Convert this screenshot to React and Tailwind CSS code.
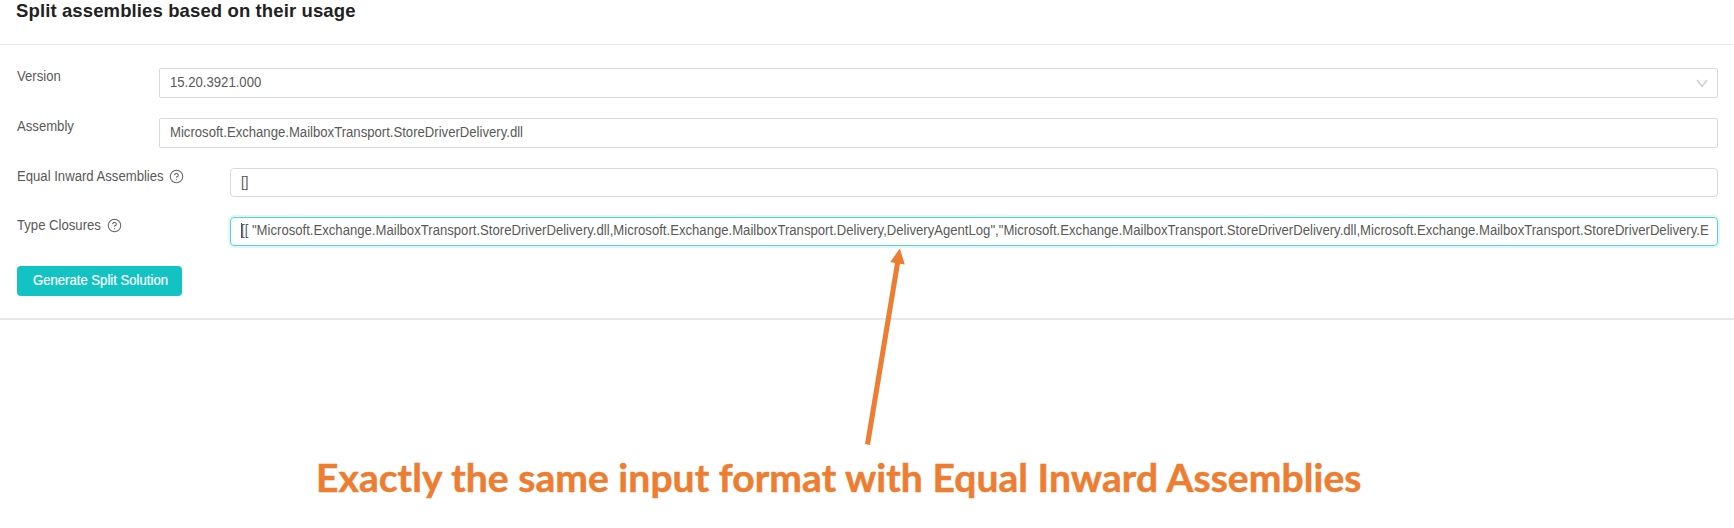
import { CircleHelp } from "lucide-react";

function Condensed({ children }) {
  return (
    <span className="inline-block origin-left scale-x-[0.9375] whitespace-nowrap">{children}</span>
  );
}

function Row({ label, helpClass, labelClass, children }) {
  return (
    <div className="flex items-start">
      <div className={`-mt-px flex h-[18px] shrink-0 items-center whitespace-nowrap ${labelClass}`}>
        <Condensed>{label}</Condensed>
        {helpClass && (
          <CircleHelp className={`size-[15px] shrink-0 text-[#666666] ${helpClass}`} strokeWidth={1.7} />
        )}
      </div>
      {children}
    </div>
  );
}

export default function App() {
  return (
    <div className="relative h-[528px] w-[1734px] overflow-hidden bg-white font-['Liberation_Sans',Arial,sans-serif] text-[14px] leading-[18px] text-[#595959]">
      <header className="flex h-[45px] items-start border-b border-[#e8e8e8] pl-4">
        <h1 className="whitespace-nowrap text-[18.5px] leading-[21px] font-bold tracking-[0.12px] text-[#222222]">
          Split assemblies based on their usage
        </h1>
      </header>

      <main className="flex h-[275px] flex-col border-b-2 border-[#e8e8e8] pt-[23px] pr-[16px] pl-[17px]">
        <div className="h-[50px]">
          <Row label="Version" labelClass="w-[142px]">
            <div className="flex h-[30px] flex-1 items-center justify-between rounded-[2px] border border-[#d9d9d9] pr-[9px] pb-[2px] pl-[10px]">
              <Condensed>15.20.3921.000</Condensed>
              <svg className="mt-[3px] h-[9px] w-[12px]" viewBox="0 0 12 9" fill="none" stroke="#c8c8c8" strokeWidth="1.3">
                <path d="M1 1 6 7.5 11 1" />
              </svg>
            </div>
          </Row>
        </div>
        <div className="h-[50px]">
          <Row label="Assembly" labelClass="w-[142px]">
            <div className="flex h-[30px] flex-1 items-center rounded-[2px] border border-[#d9d9d9] pb-[2px] pl-[10px]">
              <Condensed>Microsoft.Exchange.MailboxTransport.StoreDriverDelivery.dll</Condensed>
            </div>
          </Row>
        </div>
        <div className="h-[49px]">
          <Row label="Equal Inward Assemblies" helpClass="-ml-[4px]" labelClass="w-[213px]">
            <div className="flex h-[29px] flex-1 items-center rounded-[4px] border border-[#d9d9d9] pb-[2px] pl-[10px]">
              <Condensed>[]</Condensed>
            </div>
          </Row>
        </div>
        <div className="h-[48px]">
          <Row label="Type Closures" helpClass="ml-[1px]" labelClass="w-[213px]">
            <div className="flex h-[29px] min-w-0 flex-1 items-center rounded-[4px] border border-[#5ad3d1] px-[10px] pb-[3px] shadow-[0_0_0_2px_rgba(19,194,194,0.13)]">
              <i className="-mr-px h-[15px] w-px shrink-0 bg-[#555555]" />
              <div className="-mr-[6px] h-[18px] min-w-0 flex-1 overflow-hidden">
                <Condensed>
                  {'[[ "Microsoft.Exchange.MailboxTransport.StoreDriverDelivery.dll,Microsoft.Exchange.MailboxTransport.Delivery,DeliveryAgentLog","Microsoft.Exchange.MailboxTransport.StoreDriverDelivery.dll,Microsoft.Exchange.MailboxTransport.StoreDriverDelivery.E'}
                </Condensed>
              </div>
            </div>
          </Row>
        </div>
        <button className="mt-px flex h-[30px] w-[165px] items-center rounded-[4px] bg-[#13c2c2] pb-[2px] pl-[15.5px] whitespace-nowrap text-white [-webkit-text-stroke:0.2px_white]">
          <Condensed>Generate Split Solution</Condensed>
        </button>
      </main>

      <svg className="absolute top-[240px] left-[850px] h-[210px] w-[60px]" viewBox="0 0 60 210" fill="#ed7d31">
        <path d="M49.8 8.5 54.8 24.5 50 23.8 20 205 15 204 45 22.9 40.3 22Z" />
      </svg>

      <p className="flex pt-[133px] pl-[316px] whitespace-nowrap font-['Lato',sans-serif] text-[39px] leading-[48px] font-bold tracking-[0.06px] text-[#ed7d31] [-webkit-text-stroke:0.5px_#ed7d31]">
        Exactly the same input format with Equal Inward Assemblies
      </p>
    </div>
  );
}
